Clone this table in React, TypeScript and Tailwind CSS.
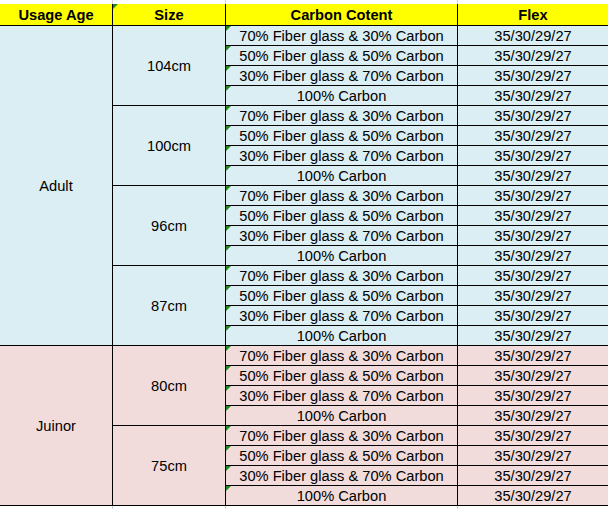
import React from "react";

const CARBON = [
  "70% Fiber glass & 30% Carbon",
  "50% Fiber glass & 50% Carbon",
  "30% Fiber glass & 70% Carbon",
  "100% Carbon",
];

const GROUPS = [
  { age: "Adult", bg: "bg-[#daeef3]", sizes: ["104cm", "100cm", "96cm", "87cm"] },
  { age: "Juinor", bg: "bg-[#f2dcdb]", sizes: ["80cm", "75cm"] },
];

function Tri() {
  return (
    <svg className="absolute left-0 top-0" width="5" height="5" viewBox="0 0 5 5">
      <polygon points="0,0 5,0 0,5" fill="#1e8c1e" />
    </svg>
  );
}

const base = "relative flex items-center justify-center border-r border-b border-black whitespace-nowrap";
const cell = `${base} pt-[2px]`;
const head = `${base} pt-[1px] bg-[#ffff00] font-bold`;

export default function App() {
  return (
    <div
      className="w-[608px] h-[509px] overflow-hidden bg-white text-black text-[14.67px] leading-none"
      style={{ fontFamily: '"Liberation Sans", Arial, sans-serif' }}
    >
      {/* top gridline strip */}
      <div className="flex h-[4px]">
        <div className="w-[113px] shrink-0 border-r border-[#d0d4dc]" />
        <div className="w-[113px] shrink-0 border-r border-[#d0d4dc]" />
        <div className="w-[232px] shrink-0 border-r border-[#d0d4dc]" />
        <div className="w-[151px] shrink-0" />
      </div>

      <div className="grid w-[609px] grid-cols-[113px_113px_232px_151px] grid-rows-[22px_repeat(24,20px)]">
        <div className={head}>Usage Age</div>
        <div className={head}>
          <Tri />
          Size
        </div>
        <div className={head}>Carbon Cotent</div>
        <div className={head}>Flex</div>

        {GROUPS.map((g) => (
          <React.Fragment key={g.age}>
            <div
              className={`${cell} ${g.bg} col-start-1 ${g.sizes.length === 4 ? "row-span-16" : "row-span-8"}`}
            >
              {g.age}
            </div>
            {g.sizes.map((s) => (
              <React.Fragment key={s}>
                <div className={`${cell} ${g.bg} col-start-2 row-span-4`}>{s}</div>
                {CARBON.map((c) => (
                  <React.Fragment key={c}>
                    <div className={`${cell} ${g.bg} col-start-3`}>
                      <Tri />
                      {c}
                    </div>
                    <div className={`${cell} ${g.bg} col-start-4`}>35/30/29/27</div>
                  </React.Fragment>
                ))}
              </React.Fragment>
            ))}
          </React.Fragment>
        ))}
      </div>

      {/* bottom gridline strip */}
      <div className="flex h-[3px]">
        <div className="w-[113px] shrink-0 border-r border-[#c8cedc]" />
        <div className="w-[113px] shrink-0 border-r border-[#c8cedc]" />
        <div className="w-[232px] shrink-0 border-r border-[#c8cedc]" />
        <div className="w-[151px] shrink-0" />
      </div>
    </div>
  );
}
